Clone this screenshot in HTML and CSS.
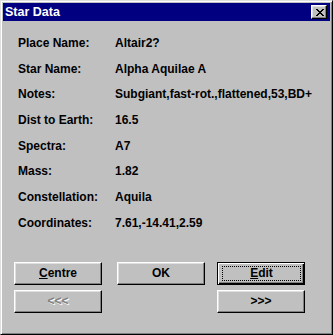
FILE: index.html
```html
<!DOCTYPE html>
<html lang="en">
<head>
    <meta charset="UTF-8">
    <meta name="viewport" content="width=device-width, initial-scale=1.0">
    <title>Star Data</title>
    <link rel="stylesheet" href="styles.css">
</head>
<body>
    <div class="window">
        <div class="titlebar">
            <span class="title">Star Data</span>
            <button class="close" aria-label="Close">
                <svg width="8" height="7" viewBox="0 0 8 7">
                    <path d="M0 0h2v1h1v1h2v-1h1v-1h2v1h-1v1h-1v1h-1v1h1v1h1v1h1v1h-2v-1h-1v-1h-2v1h-1v1h-2v-1h1v-1h1v-1h1v-1h-1v-1h-1v-1h-1z" fill="#000"/>
                </svg>
            </button>
        </div>

        <div class="content">
            <div class="fields">
                <div class="label">Place Name:</div>
                <div class="value">Altair2?</div>
                <div class="label">Star Name:</div>
                <div class="value">Alpha Aquilae A</div>
                <div class="label">Notes:</div>
                <div class="value">Subgiant,fast-rot.,flattened,53,BD+</div>
                <div class="label">Dist to Earth:</div>
                <div class="value">16.5</div>
                <div class="label">Spectra:</div>
                <div class="value">A7</div>
                <div class="label">Mass:</div>
                <div class="value">1.82</div>
                <div class="label">Constellation:</div>
                <div class="value">Aquila</div>
                <div class="label">Coordinates:</div>
                <div class="value">7.61,-14.41,2.59</div>
            </div>

            <div class="buttons">
                <button class="btn"><u>C</u>entre</button>
                <button class="btn">OK</button>
                <button class="btn default"><span class="focus"><u>E</u>dit</span></button>
                <button class="btn" disabled>&lt;&lt;&lt;</button>
                <span></span>
                <button class="btn">&gt;&gt;&gt;</button>
            </div>
        </div>
    </div>
</body>
</html>
```

FILE: styles.css
```css
body {
    margin: 0;
    background-color: #c0c0c0;
    font-family: "Liberation Sans", Arial, sans-serif;
    font-size: 12px;
    font-weight: bold;
    color: #000;
}
.window {
    width: 333px;
    height: 335px;
    box-sizing: border-box;
    padding: 2px;
    border: 1px solid;
    border-color: #dfdfdf #000 #000 #dfdfdf;
    box-shadow: inset 1px 1px #fff, inset -1px -1px #808080;
    background-color: #c0c0c0;
}
.titlebar {
    height: 18px;
    background-color: #000080;
    display: flex;
    align-items: center;
    justify-content: space-between;
    padding: 0 3px 0 2px;
}
.title {
    color: #fff;
    font-size: 12.5px;
    font-weight: bold;
}
.close {
    width: 16px;
    height: 14px;
    padding: 0 0 0 1px;
    display: flex;
    align-items: center;
    justify-content: center;
    background-color: #c0c0c0;
    border: 1px solid;
    border-color: #fff #000 #000 #fff;
    box-shadow: inset -1px -1px #808080, inset 1px 1px #dfdfdf;
}
.close svg {
    display: block;
}
.content {
    padding: 9px 0 0 15px;
}
.fields {
    display: grid;
    grid-template-columns: 97px 199px;
    grid-auto-rows: 25.7px;
    align-items: center;
}
.value {
    white-space: nowrap;
}
.buttons {
    display: grid;
    grid-template-columns: 103px 100px 88px;
    grid-auto-rows: 23px;
    row-gap: 5px;
    margin: 26px 0 0 -4px;
}
.btn {
    width: 88px;
    height: 23px;
    padding: 0;
    font-family: "Liberation Sans", Arial, sans-serif;
    font-size: 12px;
    font-weight: bold;
    color: #000;
    background-color: #c0c0c0;
    border: 1px solid;
    border-color: #fff #000 #000 #fff;
    box-shadow: inset -1px -1px #808080, inset 1px 1px #dfdfdf;
}
.btn:disabled {
    color: #808080;
    text-shadow: 1px 1px #fff;
}
.btn.default {
    border: 1px solid #000;
    box-shadow: inset 1px 1px #fff, inset -1px -1px #000, inset -2px -2px #808080;
    padding: 3px 3px 3px 4px;
}
.focus {
    display: flex;
    align-items: center;
    justify-content: center;
    height: 100%;
    box-sizing: border-box;
    border: 1px dotted #000;
}
```
